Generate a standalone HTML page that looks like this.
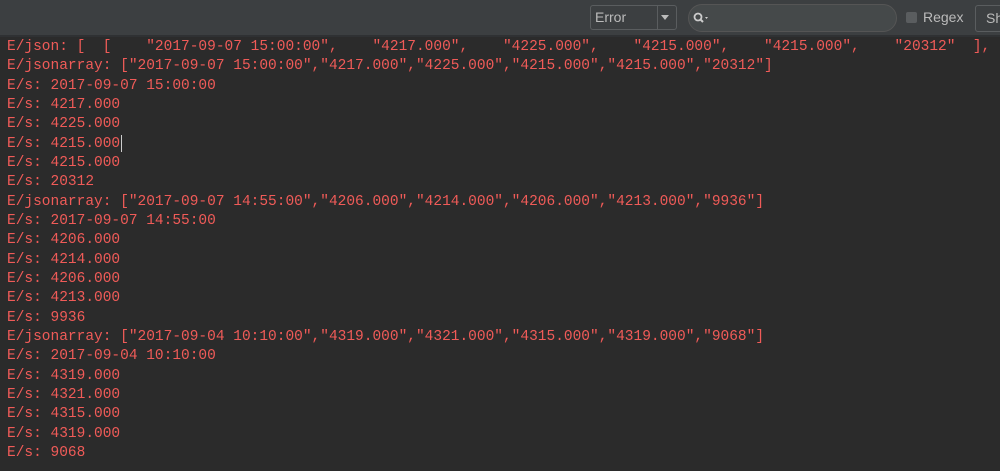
<!DOCTYPE html>
<html><head><style>
body{margin:0;width:1000px;height:471px;background:#2b2b2b;overflow:hidden;font-family:"Liberation Sans",sans-serif}
.tb{position:absolute;left:0;top:0;width:1000px;height:35px;background:#3c3f41;border-bottom:2px solid #2f3133}
.sel{position:absolute;left:590px;top:5px;width:85px;height:23px;border:1px solid #5a5d5f;border-radius:3px;background:#3c3f41;color:#bbb;font-size:14px}
.sel span{position:absolute;left:4px;top:3px}
.sel i{position:absolute;left:66px;top:0;width:1px;height:23px;background:#5a5d5f}
.sel b{position:absolute;left:70px;top:9px;border-left:4px solid transparent;border-right:4px solid transparent;border-top:5px solid #bbb}
.search{position:absolute;left:688px;top:4px;width:207px;height:26px;border:1px solid #555;border-radius:14px;background:#45494a}
.cb{position:absolute;left:906px;top:12px;width:11px;height:11px;background:#5a5d5f;border-radius:2px}
.rg{position:absolute;left:923px;top:9px;color:#bbb;font-size:14px}
.sh{position:absolute;left:975px;top:5px;width:40px;height:25px;border:1px solid #5a5d5f;border-radius:3px;color:#bbb;font-size:14px}
pre{position:absolute;left:7px;top:38px;margin:0;font-family:"Liberation Mono",monospace;font-size:14.5px;line-height:19.33px;color:#f05b58}
</style></head><body>
<div class="tb">
<div class="sel"><span>Error</span><i></i><b></b></div>
<div class="search"><svg width="24" height="14" style="position:absolute;left:3px;top:6px"><circle cx="6" cy="6" r="3.5" fill="none" stroke="#ccc" stroke-width="1.8"/><line x1="8.5" y1="8.5" x2="11" y2="11" stroke="#ccc" stroke-width="2"/><path d="M13 6l3 0l-1.5 2z" fill="#ccc"/></svg></div>
<div class="cb"></div><div class="rg">Regex</div>
<div class="sh"><span style="position:absolute;left:10px;top:4px">Sh</span></div>
</div>
<pre>E/json: [  [    "2017-09-07 15:00:00",    "4217.000",    "4225.000",    "4215.000",    "4215.000",    "20312"  ],
E/jsonarray: ["2017-09-07 15:00:00","4217.000","4225.000","4215.000","4215.000","20312"]
E/s: 2017-09-07 15:00:00
E/s: 4217.000
E/s: 4225.000
E/s: 4215.000
E/s: 4215.000
E/s: 20312
E/jsonarray: ["2017-09-07 14:55:00","4206.000","4214.000","4206.000","4213.000","9936"]
E/s: 2017-09-07 14:55:00
E/s: 4206.000
E/s: 4214.000
E/s: 4206.000
E/s: 4213.000
E/s: 9936
E/jsonarray: ["2017-09-04 10:10:00","4319.000","4321.000","4315.000","4319.000","9068"]
E/s: 2017-09-04 10:10:00
E/s: 4319.000
E/s: 4321.000
E/s: 4315.000
E/s: 4319.000
E/s: 9068</pre>
<div style="position:absolute;left:121px;top:135px;width:1px;height:17px;background:#ccc"></div>
</body></html>
